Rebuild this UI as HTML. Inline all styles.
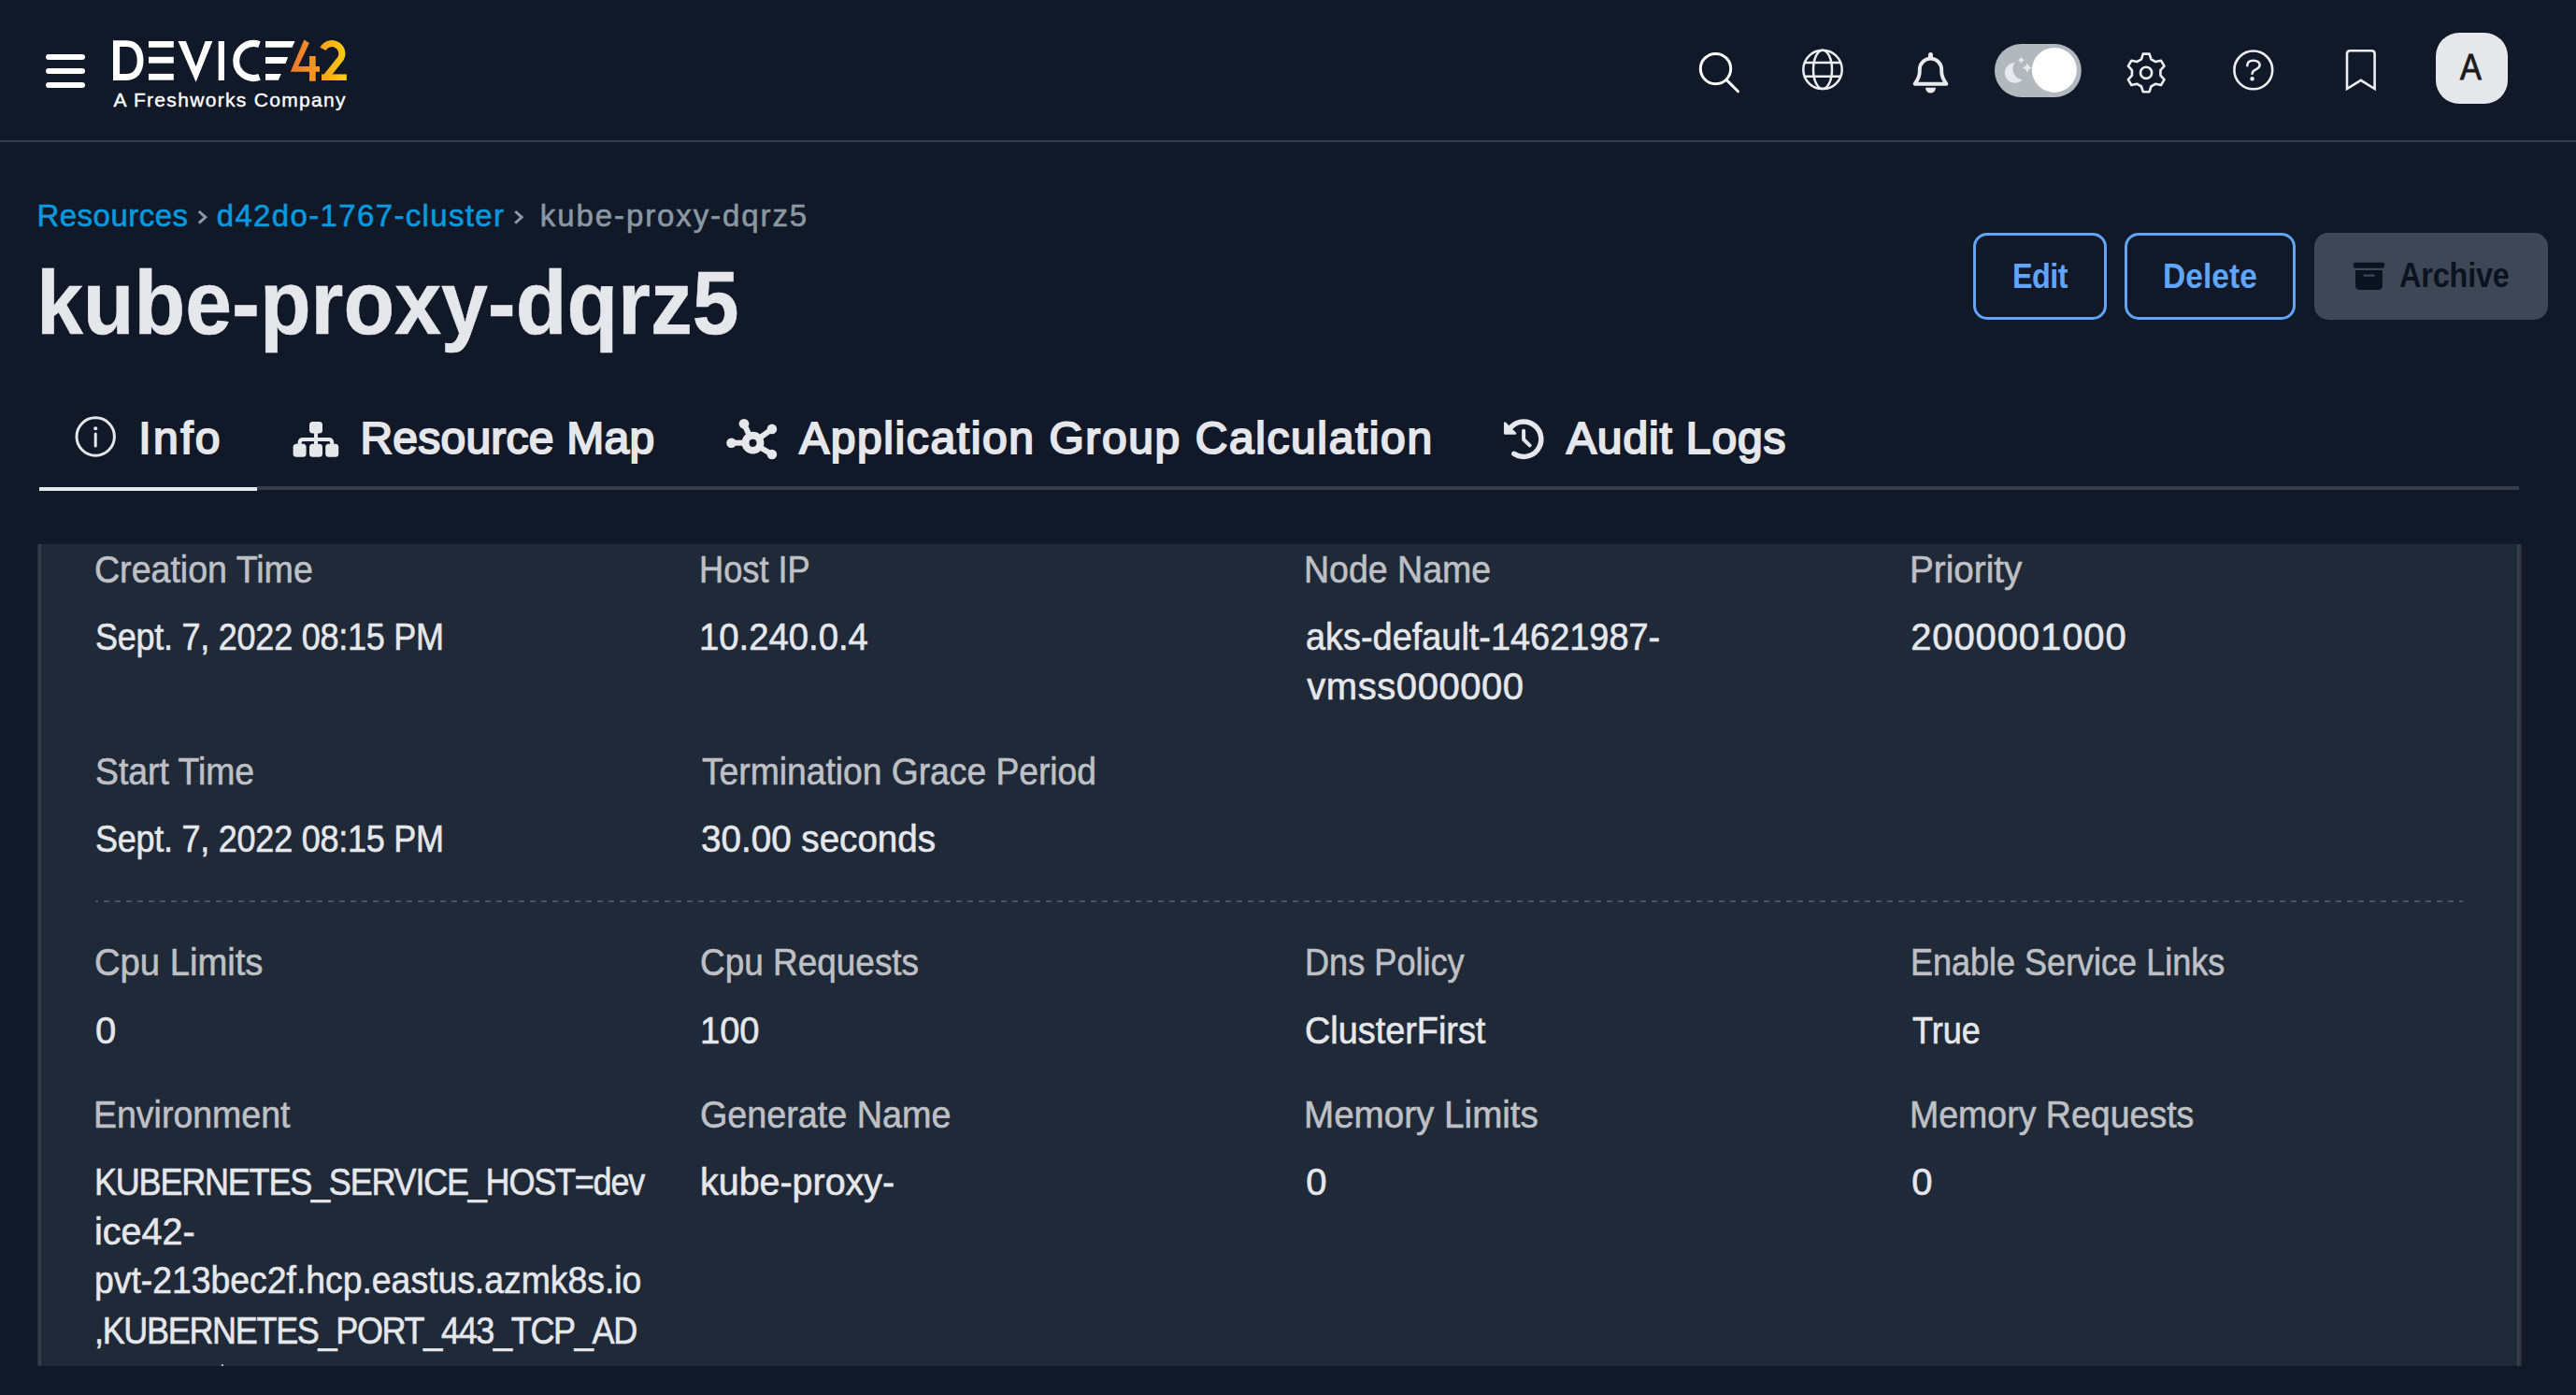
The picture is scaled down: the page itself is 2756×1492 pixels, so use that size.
<!DOCTYPE html>
<html>
<head>
<meta charset="utf-8">
<style>
html,body{margin:0;padding:0;background:#111827;}
body{width:2756px;height:1492px;overflow:hidden;background:#111827;position:relative;font-family:"Liberation Sans",sans-serif;}
.t{position:absolute;white-space:nowrap;line-height:1;font-family:"Liberation Sans",sans-serif;-webkit-text-stroke:0.6px currentColor;}
.hdr-line{position:absolute;left:0;top:150px;width:2756px;height:2px;background:#373d4a;}
.burger{position:absolute;left:49px;width:42px;height:6px;border-radius:3px;background:#ffffff;}
.avatar{position:absolute;left:2606px;top:35px;width:77px;height:76px;border-radius:25px;background:#e5e7eb;}
.btn{position:absolute;top:249px;height:93px;box-sizing:border-box;border-radius:15px;}
.btn.o{border:3px solid #60a5fa;}
.btn.g{background:#3e4756;}
.tabline{position:absolute;left:275px;top:520px;width:2420px;height:4px;background:#373d4a;}
.tabactive{position:absolute;left:42px;top:521px;width:233px;height:4px;background:#e5e7eb;}
.card{position:absolute;left:40px;top:582px;width:2658px;height:879px;background:#1f2937;}
.card .bl{position:absolute;left:0;top:0;width:4px;height:100%;background:linear-gradient(90deg,#262b37,#3e4350);}
.card .br{position:absolute;left:2653px;top:0;width:5px;height:100%;background:linear-gradient(90deg,#3e4350,#262b37);}
svg.ov{position:absolute;left:0;top:0;}
@media (max-width:2000px){html{zoom:0.5;}}
</style>
</head>
<body>
<!-- header -->
<div class="burger" style="top:58px"></div>
<div class="burger" style="top:73px"></div>
<div class="burger" style="top:88px"></div>
<div class="hdr-line"></div>
<div class="avatar"></div>
<div class="btn o" style="left:2111px;width:143px;"></div>
<div class="btn o" style="left:2273px;width:183px;"></div>
<div class="btn g" style="left:2476px;width:250px;"></div>
<div class="tabline"></div>
<div class="tabactive"></div>
<div class="card"><div class="bl"></div><div class="br"></div></div>

<svg class="ov" width="2756" height="1492" viewBox="0 0 2756 1492">
<defs>
<linearGradient id="g42" x1="310" y1="0" x2="371" y2="0" gradientUnits="userSpaceOnUse">
<stop offset="0" stop-color="#ee762d"/><stop offset="0.5" stop-color="#f49a21"/><stop offset="1" stop-color="#fdd00c"/>
</linearGradient>
</defs>
<!-- dashed separator -->
<line x1="102" y1="964" x2="2635" y2="964" stroke="#4b5362" stroke-width="2" stroke-dasharray="6 6" stroke-dashoffset="3"/>
<rect x="236.8" y="1459.3" width="2.2" height="1.7" fill="#c9cbd0"/>
<!-- logo -->
<g fill="#ffffff">
<path fill-rule="evenodd" d="M121,43.2 H135.5 C147,43.2 153.5,52 153.5,64.6 C153.5,77.2 147,86 135.5,86 H121 Z M128.1,50 H135.5 C143,50 146.7,56 146.7,64.6 C146.7,73.2 143,79.1 135.5,79.1 H128.1 Z"/>
<rect x="159" y="44" width="26.8" height="6.8"/>
<rect x="159" y="60.8" width="26.8" height="6.8"/>
<rect x="159" y="78.9" width="26.8" height="6.8"/>
<path d="M190.5,44 H198.9 L209.6,71.3 L219.6,44 H227.4 L209.6,87.8 Z"/>
<rect x="233.7" y="44" width="6.3" height="42"/>
<path d="M284,44 H315.5 L312.6,50.8 H284 Z"/>
<path d="M284,61 H308.1 L305.5,67.9 H284 Z"/>
<path d="M284,78.9 H300.8 L297.9,85.7 H284 Z"/>
</g>
<path d="M277.5,47.6 A18.5,18.5 0 1 0 277.5,82.4" fill="none" stroke="#ffffff" stroke-width="7"/>
<path fill="url(#g42)" d="M325.4,42.5 L330.9,45.9 L319.1,71 H331 V60 H337.7 V71 H342 V76.8 H337.7 V86.7 H331 V76.8 H310.8 Z"/>
<path fill="none" stroke="url(#g42)" stroke-width="7" d="M345.5,52.4 A10.8,10.8 0 1 1 364.65,62.4 L348.5,82.7"/>
<rect x="344" y="79.4" width="26.8" height="6.6" fill="url(#g42)"/>

<!-- header icons -->
<g fill="none" stroke="#ffffff" stroke-width="3" stroke-linecap="round" stroke-linejoin="round">
<circle cx="1835.5" cy="73.6" r="16.2"/>
<line x1="1847.6" y1="85.9" x2="1859.5" y2="97.8"/>
</g>
<g fill="none" stroke="#eceef1" stroke-width="2.5">
<circle cx="1950" cy="74.4" r="20.7"/>
<ellipse cx="1950" cy="74.4" rx="10" ry="20.7"/>
<line x1="1931" y1="66.9" x2="1969" y2="66.9"/>
<line x1="1931" y1="81.8" x2="1969" y2="81.8"/>
</g>
<path fill="none" stroke="#e9eaee" stroke-width="3.9" stroke-linejoin="round" d="M2048.6,89.7 H2082.4 C2079.6,86 2077.2,82 2077.2,76.5 V74.3 A11.7,11.7 0 0 0 2053.8,74.3 V76.5 C2053.8,82 2051.4,86 2048.6,89.7 Z"/>
<rect x="2063" y="56" width="5" height="7" rx="2.5" fill="#e9eaee"/>
<path d="M2060,93.8 H2071 A5.5,5.8 0 0 1 2060,93.8 Z" fill="#e9eaee"/>
<!-- toggle -->
<rect x="2134" y="47" width="92.8" height="57" rx="28.5" fill="#b3b8bf"/>
<circle cx="2197.9" cy="74.9" r="24" fill="#ffffff"/>
<path fill="#e7e9ed" fill-rule="evenodd" d="M2155.8,88.7 A10.9,10.9 0 1 1 2155.8,66.9 A11.5,11.5 0 0 0 2163.6,85.2 A10.9,10.9 0 0 1 2155.8,88.7 Z"/>
<path fill="#e7e9ed" d="M2162.4,60.699999999999996 Q2163.0480000000002,63.651999999999994 2166.0,64.3 Q2163.0480000000002,64.948 2162.4,67.89999999999999 Q2161.752,64.948 2158.8,64.3 Q2161.752,63.651999999999994 2162.4,60.699999999999996 Z"/>
<path fill="#e7e9ed" d="M2168.9,66.9 Q2169.89,71.41000000000001 2174.4,72.4 Q2169.89,73.39 2168.9,77.9 Q2167.9100000000003,73.39 2163.4,72.4 Q2167.9100000000003,71.41000000000001 2168.9,66.9 Z"/>
<!-- gear -->
<path fill="none" stroke="#eceef1" stroke-width="2.6" stroke-linejoin="round" d="M2291.00,63.30 L2292.80,57.60 L2299.60,57.60 L2301.40,63.30 L2306.24,66.10 L2312.08,64.81 L2315.48,70.69 L2311.44,75.10 L2311.44,80.70 L2315.48,85.11 L2312.08,90.99 L2306.24,89.70 L2301.40,92.50 L2299.60,98.20 L2292.80,98.20 L2291.00,92.50 L2286.16,89.70 L2280.32,90.99 L2276.92,85.11 L2280.96,80.70 L2280.96,75.10 L2276.92,70.69 L2280.32,64.81 L2286.16,66.10 Z"/>
<circle cx="2296.1" cy="77.8" r="6.1" fill="none" stroke="#eceef1" stroke-width="2.6"/>
<!-- help -->
<g fill="none" stroke="#eceef1" stroke-width="2.6" stroke-linecap="round">
<circle cx="2410.8" cy="74.9" r="20.4"/>
<path d="M2404.3,70.2 C2404.3,66.5 2407,64.8 2410.8,64.8 C2415,64.8 2417.6,66.8 2417.6,69.6 C2417.6,72.8 2414.6,73.8 2412,75.2 C2410.3,76.2 2409.6,77 2409.6,78.8"/>
</g>
<circle cx="2409.6" cy="84.3" r="2.2" fill="#eceef1"/>
<!-- bookmark -->
<path fill="none" stroke="#eceef1" stroke-width="2.6" stroke-linejoin="miter" d="M2511,95 V57.5 Q2511,54.2 2514.3,54.2 H2537.3 Q2540.6,54.2 2540.6,57.5 V95 L2525.8,85.8 Z"/>
<!-- breadcrumb chevrons -->
<g fill="none" stroke="#8a98a3" stroke-width="3" stroke-linecap="butt" stroke-linejoin="miter">
<polyline points="212.8,226 219.8,232.3 212.8,238.6"/>
<polyline points="551.2,226 558.2,232.3 551.2,238.6"/>
</g>
<!-- archive icon -->
<g fill="#0b1220">
<rect x="2517.9" y="280.8" width="33.2" height="6" rx="2"/>
<path d="M2520,289.1 H2548.9 V305.5 Q2548.9,309.9 2544.5,309.9 H2524.4 Q2520,309.9 2520,305.5 Z"/>
</g>
<rect x="2528.3" y="293.4" width="12.7" height="2.3" rx="1.1" fill="#3e4756"/>
<!-- tab icons -->
<g fill="none" stroke="#e5e7eb" stroke-width="3" stroke-linecap="round">
<circle cx="102.2" cy="467" r="20.2"/>
<line x1="102.2" y1="464" x2="102.2" y2="477"/>
</g>
<circle cx="102.2" cy="458.3" r="2" fill="#e5e7eb"/>
<g fill="#e5e7eb">
<rect x="331" y="451" width="14" height="12.5" rx="3.5"/>
<rect x="313.6" y="474.7" width="14" height="14" rx="3.5"/>
<rect x="331" y="474.7" width="14" height="14" rx="3.5"/>
<rect x="348.2" y="474.7" width="14" height="14" rx="3.5"/>
</g>
<g fill="none" stroke="#e5e7eb" stroke-width="4" stroke-linejoin="round">
<path d="M320.6,477 V473.5 Q320.6,469.9 324.2,469.9 H351.6 Q355.2,469.9 355.2,473.5 V477"/>
<line x1="338" y1="462" x2="338" y2="477"/>
</g>
<!-- app group icon -->
<g fill="#e5e7eb">
<circle cx="796" cy="453.3" r="5.4"/>
<circle cx="825.9" cy="458.9" r="5.3"/>
<circle cx="782.5" cy="473.7" r="5.3"/>
<circle cx="825.9" cy="486" r="5.3"/>
</g>
<g stroke="#e5e7eb" stroke-width="6" fill="none">
<line x1="796" y1="453.3" x2="805.5" y2="473.7"/>
<line x1="825.9" y1="458.9" x2="805.5" y2="473.7"/>
<line x1="782.5" y1="473.7" x2="805.5" y2="473.7"/>
<line x1="825.9" y1="486" x2="805.5" y2="473.7"/>
</g>
<circle cx="805.5" cy="473.7" r="8" fill="none" stroke="#e5e7eb" stroke-width="7.8"/>
<circle cx="805.5" cy="473.7" r="4" fill="#111827"/>
<!-- audit icon -->
<g fill="none" stroke="#e5e7eb" stroke-linecap="round" stroke-linejoin="round">
<path stroke-width="5.5" d="M1616.9,456.5 A18.7,18.7 0 1 1 1619.8,485.3"/>
<path stroke-width="4" d="M1630.1,460.8 V470 L1636.6,476.4"/>
</g>
<path fill="#e5e7eb" stroke="#e5e7eb" stroke-width="2.5" stroke-linejoin="round" d="M1610.2,452.6 L1621,463.6 H1610.2 Z"/>
</svg>

<div class="t" style="left:121.60px;top:95.70px;font-size:21px;font-weight:400;color:#ffffff;letter-spacing:1.316px;-webkit-text-stroke:0.4px #fff;">A Freshworks Company</div>

<div class="t" style="left:2632px;top:53.3px;font-size:38px;font-weight:400;color:#1b1b1b;-webkit-text-stroke:0.9px #1b1b1b;transform:scaleX(0.9);transform-origin:0 0;">A</div>
<div class="t" style="left:39.40px;top:213.80px;font-size:33px;font-weight:400;color:#0999de;letter-spacing:0.500px;">Resources</div>


<div class="t" style="left:231.70px;top:213.80px;font-size:33px;font-weight:400;color:#0999de;letter-spacing:1.353px;">d42do-1767-cluster</div>


<div class="t" style="left:577.80px;top:213.80px;font-size:33px;font-weight:400;color:#8a98a3;letter-spacing:1.907px;">kube-proxy-dqrz5</div>

<div class="t" style="left:38.70px;top:276.20px;font-size:96px;font-weight:700;color:#e5e7eb;letter-spacing:0.000px;transform:scaleX(0.9331);transform-origin:0 0;">kube-proxy-dqrz5</div>

<div class="t" style="left:2152.70px;top:277.80px;font-size:36px;font-weight:700;color:#60a5fa;letter-spacing:-0.592px;transform:scaleX(0.9000);transform-origin:0 0;-webkit-text-stroke:0;">Edit</div>

<div class="t" style="left:2314.13px;top:277.80px;font-size:36px;font-weight:700;color:#60a5fa;letter-spacing:0.000px;transform:scaleX(0.9333);transform-origin:0 0;-webkit-text-stroke:0;">Delete</div>

<div class="t" style="left:2567.10px;top:277.00px;font-size:36px;font-weight:700;color:#0b1220;letter-spacing:-0.185px;transform:scaleX(0.9000);transform-origin:0 0;-webkit-text-stroke:0;">Archive</div>

<div class="t" style="left:148.30px;top:445.20px;font-size:48px;font-weight:400;color:#e5e7eb;letter-spacing:2.4px;-webkit-text-stroke:2px #e5e7eb;">Info</div>

<div class="t" style="left:385.40px;top:445.20px;font-size:48px;font-weight:400;color:#e5e7eb;letter-spacing:0.24px;-webkit-text-stroke:2px #e5e7eb;">Resource Map</div>

<div class="t" style="left:855.20px;top:445.20px;font-size:48px;font-weight:400;color:#e5e7eb;letter-spacing:1.59px;-webkit-text-stroke:2px #e5e7eb;">Application Group Calculation</div>

<div class="t" style="left:1676.00px;top:445.20px;font-size:48px;font-weight:400;color:#e5e7eb;letter-spacing:0.85px;-webkit-text-stroke:2px #e5e7eb;">Audit Logs</div>

<div class="t" style="left:100.82px;top:589.10px;font-size:40px;font-weight:400;color:#bec0c5;letter-spacing:0.000px;transform:scaleX(0.9390);transform-origin:0 0;">Creation Time</div>
<div class="t" style="left:101.80px;top:661.10px;font-size:40px;font-weight:400;color:#e5e7eb;letter-spacing:-0.280px;transform:scaleX(0.9000);transform-origin:0 0;">Sept. 7, 2022 08:15 PM</div>
<div class="t" style="left:748.48px;top:589.10px;font-size:40px;font-weight:400;color:#bec0c5;letter-spacing:0.000px;transform:scaleX(0.9055);transform-origin:0 0;">Host IP</div>
<div class="t" style="left:748.33px;top:661.10px;font-size:40px;font-weight:400;color:#e5e7eb;letter-spacing:0.000px;transform:scaleX(0.9568);transform-origin:0 0;">10.240.0.4</div>
<div class="t" style="left:1395.49px;top:589.10px;font-size:40px;font-weight:400;color:#bec0c5;letter-spacing:0.000px;transform:scaleX(0.9378);transform-origin:0 0;">Node Name</div>
<div class="t" style="left:1397.35px;top:661.10px;font-size:40px;font-weight:400;color:#e5e7eb;letter-spacing:0.000px;transform:scaleX(0.9472);transform-origin:0 0;">aks-default-14621987-</div>
<div class="t" style="left:1398.30px;top:713.70px;font-size:40px;font-weight:400;color:#e5e7eb;letter-spacing:0.555px;">vmss000000</div>
<div class="t" style="left:2043.30px;top:589.10px;font-size:40px;font-weight:400;color:#bec0c5;letter-spacing:0.000px;transform:scaleX(0.9672);transform-origin:0 0;">Priority</div>
<div class="t" style="left:2044.20px;top:661.10px;font-size:40px;font-weight:400;color:#e5e7eb;letter-spacing:0.890px;">2000001000</div>
<div class="t" style="left:101.77px;top:805.00px;font-size:40px;font-weight:400;color:#bec0c5;letter-spacing:0.000px;transform:scaleX(0.9333);transform-origin:0 0;">Start Time</div>
<div class="t" style="left:101.80px;top:877.00px;font-size:40px;font-weight:400;color:#e5e7eb;letter-spacing:-0.280px;transform:scaleX(0.9000);transform-origin:0 0;">Sept. 7, 2022 08:15 PM</div>
<div class="t" style="left:751.20px;top:805.00px;font-size:40px;font-weight:400;color:#bec0c5;letter-spacing:0.000px;transform:scaleX(0.9305);transform-origin:0 0;">Termination Grace Period</div>
<div class="t" style="left:750.23px;top:877.00px;font-size:40px;font-weight:400;color:#e5e7eb;letter-spacing:0.000px;transform:scaleX(0.9651);transform-origin:0 0;">30.00 seconds</div>
<div class="t" style="left:100.79px;top:1009.20px;font-size:40px;font-weight:400;color:#bec0c5;letter-spacing:0.000px;transform:scaleX(0.9548);transform-origin:0 0;">Cpu Limits</div>
<div class="t" style="left:102.10px;top:1081.60px;font-size:40px;font-weight:400;color:#e5e7eb;letter-spacing:0.000px;">0</div>
<div class="t" style="left:749.35px;top:1009.20px;font-size:40px;font-weight:400;color:#bec0c5;letter-spacing:0.000px;transform:scaleX(0.9235);transform-origin:0 0;">Cpu Requests</div>
<div class="t" style="left:748.94px;top:1081.60px;font-size:40px;font-weight:400;color:#e5e7eb;letter-spacing:0.000px;transform:scaleX(0.9524);transform-origin:0 0;">100</div>
<div class="t" style="left:1395.59px;top:1009.20px;font-size:40px;font-weight:400;color:#bec0c5;letter-spacing:0.000px;transform:scaleX(0.9032);transform-origin:0 0;">Dns Policy</div>
<div class="t" style="left:1396.41px;top:1081.60px;font-size:40px;font-weight:400;color:#e5e7eb;letter-spacing:0.000px;transform:scaleX(0.9458);transform-origin:0 0;">ClusterFirst</div>
<div class="t" style="left:2043.50px;top:1009.20px;font-size:40px;font-weight:400;color:#bec0c5;letter-spacing:0.000px;transform:scaleX(0.9000);transform-origin:0 0;">Enable Service Links</div>
<div class="t" style="left:2046.20px;top:1081.60px;font-size:40px;font-weight:400;color:#e5e7eb;letter-spacing:0.000px;transform:scaleX(0.9000);transform-origin:0 0;">True</div>
<div class="t" style="left:99.89px;top:1172.10px;font-size:40px;font-weight:400;color:#bec0c5;letter-spacing:0.000px;transform:scaleX(0.9369);transform-origin:0 0;">Environment</div>
<div class="t" style="left:100.50px;top:1243.80px;font-size:40px;font-weight:400;color:#e5e7eb;letter-spacing:-1.339px;transform:scaleX(0.9000);transform-origin:0 0;">KUBERNETES_SERVICE_HOST=dev</div>
<div class="t" style="left:101.22px;top:1296.80px;font-size:40px;font-weight:400;color:#e5e7eb;letter-spacing:0.000px;transform:scaleX(0.9877);transform-origin:0 0;">ice42-</div>
<div class="t" style="left:101.33px;top:1349.00px;font-size:40px;font-weight:400;color:#e5e7eb;letter-spacing:0.000px;transform:scaleX(0.9335);transform-origin:0 0;">pvt-213bec2f.hcp.eastus.azmk8s.io</div>
<div class="t" style="left:100.50px;top:1402.70px;font-size:40px;font-weight:400;color:#e5e7eb;letter-spacing:-1.470px;transform:scaleX(0.9000);transform-origin:0 0;">,KUBERNETES_PORT_443_TCP_AD</div>
<div class="t" style="left:749.31px;top:1172.10px;font-size:40px;font-weight:400;color:#bec0c5;letter-spacing:0.000px;transform:scaleX(0.9431);transform-origin:0 0;">Generate Name</div>
<div class="t" style="left:749.23px;top:1243.80px;font-size:40px;font-weight:400;color:#e5e7eb;letter-spacing:0.000px;transform:scaleX(0.9856);transform-origin:0 0;">kube-proxy-</div>
<div class="t" style="left:1395.41px;top:1172.10px;font-size:40px;font-weight:400;color:#bec0c5;letter-spacing:0.000px;transform:scaleX(0.9648);transform-origin:0 0;">Memory Limits</div>
<div class="t" style="left:1397.30px;top:1243.80px;font-size:40px;font-weight:400;color:#e5e7eb;letter-spacing:0.000px;">0</div>
<div class="t" style="left:2043.39px;top:1172.10px;font-size:40px;font-weight:400;color:#bec0c5;letter-spacing:0.000px;transform:scaleX(0.9377);transform-origin:0 0;">Memory Requests</div>
<div class="t" style="left:2045.20px;top:1243.80px;font-size:40px;font-weight:400;color:#e5e7eb;letter-spacing:0.000px;">0</div>

</body>
</html>
